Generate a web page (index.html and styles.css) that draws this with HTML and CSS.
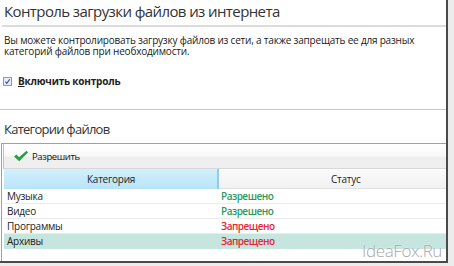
FILE: index.html
```html
<!DOCTYPE html>
<html lang="ru">
<head>
    <meta charset="UTF-8">
    <title>Контроль загрузки файлов из интернета</title>
    <link rel="stylesheet" href="styles.css">
</head>
<body>
    <div class="window">
        <h1 class="title">Контроль загрузки файлов из интернета</h1>
        <p class="desc">Вы можете контролировать загрузку файлов из сети, а также запрещать ее для разных категорий файлов при необходимости.</p>

        <label class="toggle">
            <span class="box">
                <svg width="9" height="9" viewBox="0 0 9 9"><path d="M1.8 4.6 L3.6 6.8 L7.4 1.6" fill="none" stroke="#2a4fa8" stroke-width="1.4"/></svg>
            </span>
            <span class="toggle-text"><u>В</u>ключить контроль</span>
        </label>

        <div class="section">
            <h2 class="section-title">Категории файлов</h2>
            <div class="list">
                <div class="toolbar">
                    <span class="tool">
                        <svg width="16" height="12" viewBox="0 0 16 12"><path d="M1 6.5 L3.5 4.5 L6 7.2 L13.5 0.8 L15 2.4 L6.2 11.2 Z" fill="#2aa046"/></svg>
                        Разрешить
                    </span>
                </div>
                <table class="grid">
                    <thead>
                        <tr>
                            <th class="col-cat">Категория</th>
                            <th class="col-status">Статус</th>
                        </tr>
                    </thead>
                    <tbody>
                        <tr><td>Музыка</td><td class="allowed">Разрешено</td></tr>
                        <tr><td>Видео</td><td class="allowed">Разрешено</td></tr>
                        <tr><td>Программы</td><td class="denied">Запрещено</td></tr>
                        <tr class="selected"><td>Архивы</td><td class="denied">Запрещено</td></tr>
                    </tbody>
                </table>
            </div>
        </div>

        <div class="watermark">IdeaFox.Ru</div>
    </div>
</body>
</html>
```

FILE: styles.css
```css
body {
    margin: 0;
    background: #ececec;
    font-family: 'Open Sans', sans-serif;
    color: #222;
}
.window {
    position: relative;
    width: 446px;
    height: 261px;
    background: #ffffff;
    border-right: 2px solid #4a4a4a;
    border-bottom: 2px solid #4a4a4a;
    overflow: hidden;
}
.title {
    margin: 0 0 0 2px;
    padding: 1px 2px 3px;
    font-size: 15px;
    font-weight: normal;
    letter-spacing: -0.6px;
    line-height: 21px;
    color: #333;
    border-bottom: 2px solid #dcdcdc;
}
.desc {
    margin: 8px 0 0;
    padding: 0 4px;
    font-size: 10px;
    letter-spacing: -0.2px;
    line-height: 11px;
    color: #1a1a1a;
}
.toggle {
    display: flex;
    align-items: center;
    gap: 6px;
    margin: 18px 0 0 3px;
    height: 12px;
    font-size: 10px;
    font-weight: bold;
    letter-spacing: -0.2px;
}
.box {
    display: flex;
    align-items: center;
    justify-content: center;
    width: 7px;
    height: 7px;
    border: 1px solid #8a9cb8;
    background: #e4ecf7;
}
.section {
    margin-top: 22px;
    border-top: 1px solid #c8c8c8;
}
.section-title {
    margin: 11px 0 0 4px;
    font-size: 13px;
    font-weight: normal;
    letter-spacing: -0.75px;
    line-height: 17px;
    color: #333;
}
.list {
    margin: 5px 0 0 1px;
    border-left: 1px solid #a0a0a0;
    border-top: 1px solid #a0a0a0;
    height: 117px;
}
.toolbar {
    margin-left: 1px;
    height: 24px;
    border-left: 1px solid #c0c0c0;
    border-bottom: 1px solid #d8d8d8;
    background: linear-gradient(#ffffff 0, #f8f8f8 50%, #eeeeee 55%, #efefef 100%);
    display: flex;
    align-items: center;
}
.tool {
    display: flex;
    align-items: center;
    gap: 3px;
    margin-left: 9px;
    font-size: 9.5px;
    letter-spacing: -0.4px;
    color: #111;
}
.grid {
    margin-left: 2px;
    width: 443px;
    border-collapse: collapse;
    font-size: 10px;
    letter-spacing: -0.25px;
}
.grid th {
    height: 19px;
    padding: 0;
    font-weight: normal;
    text-align: left;
    color: #222;
}
.col-cat {
    width: 213px;
    text-indent: 83px;
    background: linear-gradient(#d2f0fd, #b8e4f8);
    border-right: 2px solid #90cdea;
}
.col-status {
    text-indent: 112px;
    background: linear-gradient(#fbfbfb, #f1f1f1);
    border-bottom: 1px solid #e0e0e0;
}
.grid td {
    height: 14px;
    padding: 0 0 0 3px;
    border-bottom: 1px solid #ececec;
    line-height: 14px;
}
.allowed {
    color: #2a9a5c;
    font-weight: 600;
    letter-spacing: -0.5px;
}
.denied {
    color: #e42636;
    font-weight: 600;
    letter-spacing: -0.5px;
}
.selected td {
    background: #c5e5de;
    border-bottom-color: #c5e5de;
}
.watermark {
    position: absolute;
    right: 4px;
    bottom: -1px;
    font-size: 17px;
    font-weight: 300;
    letter-spacing: -0.4px;
    color: #a8a8a8;
    text-shadow: 0 0 2px #ffffff;
}
```
